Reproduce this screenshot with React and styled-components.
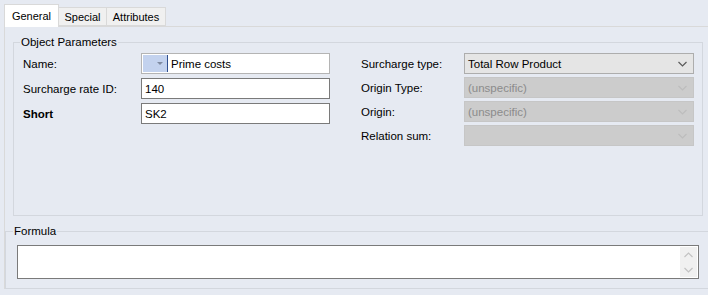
import React from 'react'
import styled, { createGlobalStyle } from 'styled-components'

const Global = createGlobalStyle`
  body {
    margin: 0;
    background: #e6eaf2;
    font-family: "Liberation Sans", Arial, sans-serif;
    font-size: 11px;
    color: #000;
  }
`

const Window = styled.div`
  width: 708px;
  height: 295px;
  overflow: hidden;
  box-sizing: border-box;
  padding: 4px 0 0 4px;
`

const TabStrip = styled.div`
  display: flex;
  align-items: flex-end;
  height: 22px;
  position: relative;
  z-index: 1;
`

const Tab = styled.div`
  box-sizing: border-box;
  width: ${p => p.$w}px;
  height: ${p => (p.$active ? 23 : 19)}px;
  margin-bottom: ${p => (p.$active ? -1 : 0)}px;
  background: ${p => (p.$active ? '#fff' : '#f0f0f0')};
  border: 1px solid #d9d9d9;
  border-bottom: ${p => (p.$active ? 'none' : '1px solid #d9d9d9')};
  border-left: ${p => (p.$first ? '1px solid #d9d9d9' : 'none')};
  display: flex;
  justify-content: center;
  padding-top: ${p => (p.$active ? 5 : 3)}px;
  font-size: 11px;
`

const Page = styled.div`
  width: 710px;
  border-top: 1px solid #d9d9d9;
  border-left: 1px solid #d9d9d9;
  padding-top: 8px;
`

const Group = styled.fieldset`
  box-sizing: border-box;
  margin: ${p => p.$margin};
  padding: ${p => p.$pad};
  width: ${p => p.$w}px;
  height: ${p => p.$h}px;
  border: 1px solid #d3d7de;
  min-width: 0;
`

const Legend = styled.legend`
  padding: 0 1px;
  margin-left: ${p => p.$offset}px;
  line-height: 14px;
  font-size: 11.5px;
  color: #000;
`

const Columns = styled.div`
  display: flex;
  gap: 31px;
`

const Column = styled.div`
  display: flex;
  flex-direction: column;
  gap: ${p => p.$gap}px;
`

const Row = styled.div`
  display: flex;
  align-items: center;
  height: ${p => p.$h}px;
`

const Label = styled.div`
  width: ${p => p.$w}px;
  font-weight: ${p => (p.$bold ? 700 : 400)};
  font-size: 11.5px;
  color: #000;
`

const TextBox = styled.div`
  box-sizing: border-box;
  width: 189px;
  height: 100%;
  background: #fff;
  border: 1px solid ${p => (p.$light ? '#b4b4b4' : '#7a7a7a')};
  display: flex;
  align-items: center;
  padding-left: ${p => (p.$light ? 1 : 3)}px;
  font-size: 11.5px;
`

const LookupButton = styled.div`
  width: 25px;
  height: 17px;
  background: #c3d2ee;
  display: flex;
  align-items: center;
  justify-content: flex-end;
  padding-right: 4px;
  box-sizing: border-box;
  border-right: 1px solid #2f4f8f;
  margin-right: 3px;
`

const Caret = styled.div`
  width: 0;
  height: 0;
  border-left: 3px solid transparent;
  border-right: 3px solid transparent;
  border-top: 3px solid #7f8aa0;
`

const Combo = styled.div`
  box-sizing: border-box;
  width: 230px;
  height: 21px;
  border: 1px solid;
  background: ${p => (p.$disabled ? '#cccccc' : '#e5e5e5')};
  border-color: ${p => (p.$disabled ? '#c6c6c6' : '#adadad')};
  color: ${p => (p.$disabled ? '#8b8b8b' : '#000')};
  display: flex;
  align-items: center;
  justify-content: space-between;
  padding: 0 6px 0 3px;
  font-size: 11.5px;
`

const FormulaBox = styled.div`
  box-sizing: border-box;
  width: 682px;
  height: 34px;
  background: #fff;
  border: 1px solid #7a7a7a;
  display: flex;
  justify-content: flex-end;
  padding: 1px;
`

const SpinStrip = styled.div`
  width: 17px;
  background: #f0f0f0;
  display: flex;
  flex-direction: column;
  justify-content: space-around;
  align-items: center;
`

function Chevron({ up, color }) {
  return (
    <svg width="9" height="6" viewBox="0 0 9 6">
      <path
        d={up ? 'M0.5 5L4.5 1L8.5 5' : 'M0.5 1L4.5 5L8.5 1'}
        fill="none"
        stroke={color}
        strokeWidth="1.2"
      />
    </svg>
  )
}

const leftRows = [
  { label: 'Name:', value: 'Prime costs', lookup: true },
  { label: 'Surcharge rate ID:', value: '140' },
  { label: 'Short', value: 'SK2', bold: true }
]

const rightRows = [
  { label: 'Surcharge type:', value: 'Total Row Product' },
  { label: 'Origin Type:', value: '(unspecific)', disabled: true },
  { label: 'Origin:', value: '(unspecific)', disabled: true },
  { label: 'Relation sum:', value: '', disabled: true }
]

export default function App() {
  return (
    <Window>
      <Global />
      <TabStrip>
        <Tab $w={55} $active $first>General</Tab>
        <Tab $w={48}>Special</Tab>
        <Tab $w={59}>Attributes</Tab>
      </TabStrip>
      <Page>
        <Group $margin="0 0 0 8px" $pad="4px 7px 0 9px" $w={690} $h={181}>
          <Legend $offset={-3}>Object Parameters</Legend>
          <Columns>
            <Column $gap={4}>
              {leftRows.map(r => (
                <Row key={r.label} $h={21}>
                  <Label $w={118} $bold={r.bold}>{r.label}</Label>
                  <TextBox $light={r.lookup}>
                    {r.lookup && (
                      <LookupButton>
                        <Caret />
                      </LookupButton>
                    )}
                    {r.value}
                  </TextBox>
                </Row>
              ))}
            </Column>
            <Column $gap={3}>
              {rightRows.map(r => (
                <Row key={r.label} $h={21}>
                  <Label $w={103}>{r.label}</Label>
                  <Combo $disabled={r.disabled}>
                    <span>{r.value}</span>
                    <Chevron color={r.disabled ? '#bdbdbd' : '#5a5a5a'} />
                  </Combo>
                </Row>
              ))}
            </Column>
          </Columns>
        </Group>
        <Group $margin="8px 0 0 0" $pad="7px 0 9px 11px" $w={710} $h={65}>
          <Legend $offset={-4}>Formula</Legend>
          <FormulaBox>
            <SpinStrip>
              <Chevron up color="#c2c2c2" />
              <Chevron color="#c2c2c2" />
            </SpinStrip>
          </FormulaBox>
        </Group>
      </Page>
    </Window>
  )
}
